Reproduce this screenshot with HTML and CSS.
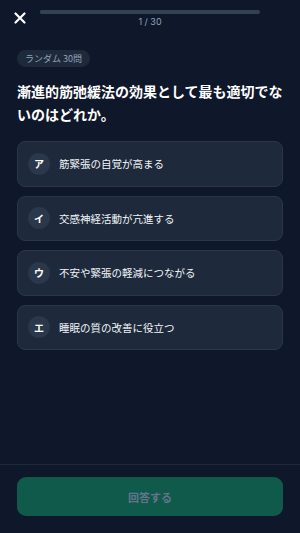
FILE: index.html
```html
<!DOCTYPE html>
<html lang="ja">
<head>
    <meta charset="UTF-8">
    <meta name="viewport" content="width=device-width, initial-scale=1.0">
    <title>Quiz</title>
    <link rel="stylesheet" href="styles.css">
</head>
<body>
    <div class="screen">
        <header class="top-bar">
            <button class="close-btn" aria-label="閉じる">
                <svg width="12" height="12" viewBox="0 0 12 12">
                    <path d="M1.5 1.5 L10.5 10.5 M10.5 1.5 L1.5 10.5" stroke="#fff" stroke-width="2.2" stroke-linecap="round"/>
                </svg>
            </button>
            <div class="progress">
                <div class="progress-track">
                    <div class="progress-fill" style="width: 3.3%"></div>
                </div>
                <span class="progress-text">1 / 30</span>
            </div>
        </header>

        <main class="content">
            <span class="chip">ランダム 30問</span>
            <h1 class="question">漸進的筋弛緩法の効果として最も適切でないのはどれか。</h1>

            <div class="options">
                <button class="option"><span class="badge">ア</span><span class="option-text">筋緊張の自覚が高まる</span></button>
                <button class="option"><span class="badge">イ</span><span class="option-text">交感神経活動が亢進する</span></button>
                <button class="option"><span class="badge">ウ</span><span class="option-text">不安や緊張の軽減につながる</span></button>
                <button class="option"><span class="badge">エ</span><span class="option-text">睡眠の質の改善に役立つ</span></button>
            </div>
        </main>

        <footer class="footer">
            <button class="submit-btn" disabled>回答する</button>
        </footer>
    </div>
</body>
</html>
```

FILE: styles.css
```css
* {
    box-sizing: border-box;
}

body {
    margin: 0;
    background: #0f172a;
    font-family: "Noto Sans CJK JP", "Noto Sans", sans-serif;
    color: #f8fafc;
}

.screen {
    height: 533px;
    display: flex;
    flex-direction: column;
}

.top-bar {
    display: flex;
    align-items: flex-start;
    padding: 10px 40px 0 14px;
    gap: 14px;
}

.close-btn {
    background: none;
    border: none;
    padding: 0;
    margin-top: 2px;
    width: 12px;
    height: 12px;
    display: flex;
    cursor: pointer;
}

.progress {
    flex: 1;
    display: flex;
    flex-direction: column;
    align-items: center;
}

.progress-track {
    width: 100%;
    height: 4px;
    background: #334155;
    border-radius: 2px;
    overflow: hidden;
}

.progress-fill {
    height: 100%;
    background: #334155;
}

.progress-text {
    margin-top: 2px;
    font-size: 9px;
    color: #94a3b8;
    font-family: "Inter", "Noto Sans", sans-serif;
}

.content {
    flex: 1;
    padding: 16px 17px 0;
}

.chip {
    display: inline-block;
    background: #1e293b;
    color: #94a3b8;
    font-size: 9px;
    line-height: 17px;
    padding: 0 8px;
    border-radius: 9px;
}

.question {
    margin: 13px 0 15px;
    font-size: 14px;
    line-height: 23px;
    font-weight: 700;
    color: #fff;
}

.options {
    display: flex;
    flex-direction: column;
    gap: 9px;
}

.option {
    display: flex;
    align-items: center;
    gap: 9px;
    height: 45.5px;
    padding: 0 10px;
    background: #1e293b;
    border: 1px solid #2b3649;
    border-radius: 8px;
    font-family: inherit;
    text-align: left;
    cursor: pointer;
}

.badge {
    width: 22px;
    height: 22px;
    border-radius: 50%;
    background: #2b374a;
    color: #fff;
    font-size: 10px;
    font-weight: 700;
    display: flex;
    align-items: center;
    justify-content: center;
    flex-shrink: 0;
}

.option-text {
    font-size: 10.5px;
    color: #f1f5f9;
}

.footer {
    border-top: 1px solid #1e293b;
    padding: 12px 17px 17px;
}

.submit-btn {
    width: 100%;
    height: 39px;
    border: none;
    border-radius: 9px;
    background: #0f5a4b;
    color: #64748b;
    font-family: inherit;
    font-size: 11px;
    font-weight: 700;
}
```
